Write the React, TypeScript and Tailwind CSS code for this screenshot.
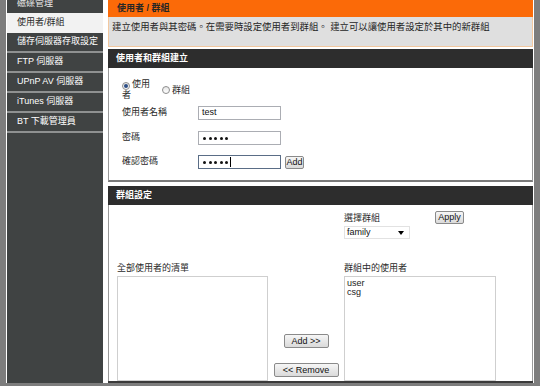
import React from "react";

function SideItem({ label, active }: { label: string; active?: boolean }) {
  return (
    <div
      className={
        "h-[18px] flex items-center pl-[10px] whitespace-nowrap " +
        (active ? "bg-[#f2f2f2] text-[#2a2a2a]" : "text-white")
      }
    >
      {label}
    </div>
  );
}

const Sep = () => <div className="h-[2px] bg-[#8f9191]" />;

function Radio({ checked }: { checked?: boolean }) {
  return (
    <span className="inline-flex w-[8px] h-[8px] rounded-full border border-[#8d8d8d] bg-gradient-to-b from-[#e6e6e6] to-white items-center justify-center align-[-1px] mr-[2px]">
      {checked ? <span className="w-[4px] h-[4px] rounded-full bg-[#2d4f86]" /> : null}
    </span>
  );
}

function Btn({ children, className }: { children: React.ReactNode; className?: string }) {
  return (
    <div
      className={
        "flex items-center justify-center rounded-[2px] border border-[#8a8a8a] bg-gradient-to-b from-[#f6f6f6] to-[#dadada] text-[#111] leading-none " +
        (className ?? "")
      }
    >
      {children}
    </div>
  );
}

function Dots() {
  return (
    <span className="flex gap-[2.5px] items-center">
      <span className="w-[3px] h-[3px] rounded-full bg-[#111]" />
      <span className="w-[3px] h-[3px] rounded-full bg-[#111]" />
      <span className="w-[3px] h-[3px] rounded-full bg-[#111]" />
      <span className="w-[3px] h-[3px] rounded-full bg-[#111]" />
      <span className="w-[3px] h-[3px] rounded-full bg-[#111]" />
    </span>
  );
}

export default function App() {
  return (
    <div className="w-[540px] h-[386px] bg-[#7d7d7d] flex pl-[6px] pr-[6px] pb-[3px] font-['Liberation_Sans','Noto_Sans_CJK_TC',sans-serif] text-[9px] text-[#2a2a2a]">
      <div className="flex-1 flex bg-white pl-px pr-px overflow-hidden">
        {/* Sidebar */}
        <aside className="w-[96px] bg-[#404343] flex flex-col overflow-hidden">
          <div className="h-[13px] overflow-hidden">
            <div className="-mt-[5px] pl-[10px] h-[18px] flex items-center text-[#e8e8e8] whitespace-nowrap">磁碟管理</div>
          </div>
          <div className="h-[20px] flex items-center pl-[10px] bg-[#f2f2f2] text-[#2a2a2a] whitespace-nowrap">使用者/群組</div>
          <SideItem label="儲存伺服器存取設定" />
          <Sep />
          <SideItem label="FTP 伺服器" />
          <Sep />
          <SideItem label="UPnP AV 伺服器" />
          <Sep />
          <SideItem label="iTunes 伺服器" />
          <Sep />
          <SideItem label="BT 下載管理員" />
          <Sep />
        </aside>

        {/* Main */}
        <main className="ml-[5px] w-[425px] flex flex-col">
          <div className="h-[17px] bg-[#fb6a08] flex items-center pl-[9px] font-bold text-[#262626] whitespace-nowrap">
            使用者 / 群組
          </div>
          <div className="h-[30px] bg-[#dfdfdf] border-x border-b border-[#f2c8a0] pl-[3px] pt-[4px] leading-[11px] text-[9.4px] text-[#262626] whitespace-nowrap">
            建立使用者與其密碼。在需要時設定使用者到群組。 建立可以讓使用者設定於其中的新群組
          </div>
          <div className="h-[2px]" />
          <div className="h-[19px] bg-[#2d2d2d] flex items-center pl-[8px] font-bold text-white whitespace-nowrap">
            使用者和群組建立
          </div>

          {/* Section 1 */}
          <div className="h-[114px] border-x border-[#9a9a9a] border-b-2 border-b-[#7a7a7a] flex flex-col">
            <div className="flex items-center pl-[13px] pt-[11px]">
              <div className="w-[30px] leading-[11px]">
                <Radio checked />
                使用者
              </div>
              <div className="ml-[10px] leading-[11px] whitespace-nowrap">
                <Radio />
                群組
              </div>
            </div>
            <div className="flex items-center pl-[13px] mt-[5px] h-[14px]">
              <div className="w-[76px] whitespace-nowrap">使用者名稱</div>
              <div className="w-[83px] h-[14px] border border-[#abadb3] flex items-center pl-[3px] text-[#111]">test</div>
            </div>
            <div className="flex items-center pl-[13px] mt-[11px] h-[14px]">
              <div className="w-[76px] whitespace-nowrap">密碼</div>
              <div className="w-[83px] h-[14px] border border-[#abadb3] flex items-center pl-[4px]">
                <Dots />
              </div>
            </div>
            <div className="flex items-center pl-[13px] mt-[10px] h-[14px]">
              <div className="w-[76px] whitespace-nowrap">確認密碼</div>
              <div className="w-[83px] h-[14px] border border-[#5a6d86] flex items-center pl-[4px]">
                <Dots />
                <span className="ml-[2px] w-px h-[10px] bg-black" />
              </div>
              <Btn className="ml-[4px] w-[19px] h-[13px]">Add</Btn>
            </div>
          </div>

          <div className="h-[4px]" />
          <div className="h-[19px] bg-[#2d2d2d] flex items-center pl-[8px] font-bold text-white whitespace-nowrap">
            群組設定
          </div>

          {/* Section 2 */}
          <div className="flex-1 border-x border-[#9a9a9a] flex flex-col min-h-0">
            <div className="flex items-start pl-[235px]">
              <div className="w-[91px] pt-[8px]">
                <div className="leading-[11px] whitespace-nowrap">選擇群組</div>
                <div className="mt-[2px] w-[66px] h-[13px] bg-white border border-[#e2e2e2] flex items-center justify-between pl-[2px] pr-[5px] text-[#111]">
                  <span>family</span>
                  <span className="w-0 h-0 border-l-[3px] border-r-[3px] border-t-[4px] border-l-transparent border-r-transparent border-t-black" />
                </div>
              </div>
              <Btn className="mt-[6px] w-[29px] h-[13px]">Apply</Btn>
            </div>

            <div className="flex mt-[24px] leading-[11px] whitespace-nowrap">
              <div className="ml-[8px] w-[227px]">全部使用者的清單</div>
              <div>群組中的使用者</div>
            </div>

            <div className="flex flex-1 mt-[2px] min-h-0">
              <div className="ml-[8px] w-[151px] border border-[#cfcfcf] bg-white" />
              <div className="w-[76px] flex flex-col items-center pt-[58px]">
                <Btn className="w-[45px] h-[14px]">Add &gt;&gt;</Btn>
                <Btn className="mt-[15px] w-[65px] h-[14px]">&lt;&lt; Remove</Btn>
              </div>
              <div className="w-[152px] border border-[#cfcfcf] bg-white pl-[2px] pt-[2px] leading-[9px] text-[#222]">
                <div>user</div>
                <div>csg</div>
              </div>
            </div>
          </div>
          <div className="h-[2px] bg-[#3a3a3a]" />
        </main>
      </div>
    </div>
  );
}
